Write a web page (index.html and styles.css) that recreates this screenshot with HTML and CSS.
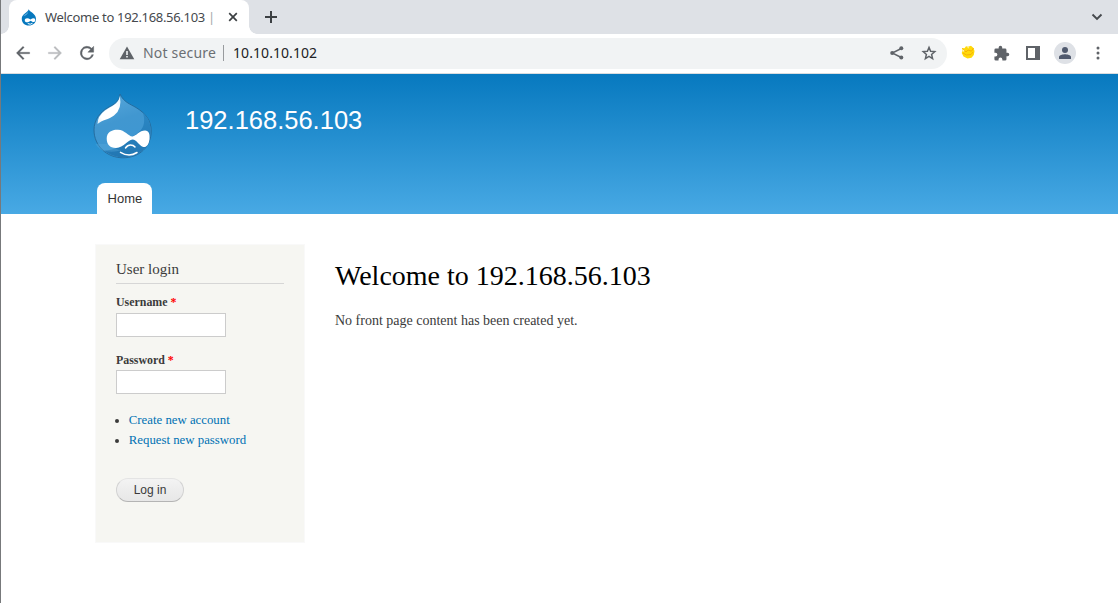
FILE: index.html
```
<!DOCTYPE html>
<html lang="en">
<head>
<meta charset="utf-8">
<title>Welcome to 192.168.56.103</title>
<link rel="stylesheet" href="styles.css">
</head>
<body>
<div class="window">
  <div class="tabstrip">
    <div class="tab">
      <svg class="favicon" width="16" height="17" viewBox="0 0 64 68"><path fill="#0678be" d="M31 1C34 12 60 18 60 40C60 57 47 66 31 66S3 56 3 39C3 20 27 14 31 1Z"/><path fill="#fff" d="M15 45C15 36 27 34 38 42C48 34 58 35 57 45C56 55 47 53 39 47C31 54 15 57 15 45Z"/><path stroke="#fff" stroke-width="4" fill="none" d="M27 58Q37 64 46 57"/><path fill="#65afe0" d="M29 9C26 19 16 20 9 29C15 27 28 24 29 9Z"/></svg>
      <span class="tab-title">Welcome to 192.168.56.103 <i class="tab-pipe">|</i></span>
      <svg class="tab-close" width="10" height="10" viewBox="0 0 10 10"><path d="M1.2 1.2 8.8 8.8M8.8 1.2 1.2 8.8" stroke="#3c4043" stroke-width="1.7"/></svg>
    </div>
    <svg class="new-tab" width="14" height="14" viewBox="0 0 14 14"><path d="M7 1V13M1 7H13" stroke="#3c4043" stroke-width="2"/></svg>
    <svg class="tab-search" width="12" height="8" viewBox="0 0 12 8"><path d="M1.5 1.5 6 6 10.500 1.5" fill="none" stroke="#45494d" stroke-width="1.9"/></svg>
  </div>
  <div class="toolbar">
    <svg class="nav-icon" width="20" height="20" viewBox="0 0 24 24"><path fill="#5f6368" d="M20 11H7.800l5.600-5.600L12 4l-8 8 8 8 1.400-1.400L7.800 13H20z" stroke="#5f6368" stroke-width=".3"/></svg>
    <svg class="nav-icon" width="20" height="20" viewBox="0 0 24 24"><path fill="#babcbe" d="M4 11h12.200l-5.600-5.600L12 4l8 8-8 8-1.400-1.400 5.600-5.600H4z" stroke="#babcbe" stroke-width=".3"/></svg>
    <svg class="nav-icon" width="20" height="20" viewBox="0 0 24 24"><path fill="#5f6368" stroke="#5f6368" stroke-width=".5" d="M17.650 6.350A8 8 0 1 0 19.730 14h-2.080A6 6 0 1 1 12 6c1.660 0 3.140.69 4.220 1.780L13 11h7V4z"/></svg>
    <div class="omnibox">
      <svg width="16" height="14" viewBox="0 0 16 14"><path fill="#5f6368" d="M8 .5 15.300 13.200H.7Z"/><path fill="#f1f3f4" d="M7.200 5h1.600v4H7.200zM7.200 10h1.600v1.600H7.200z"/></svg>
      <span class="security">Not secure</span>
      <span class="divider"></span>
      <span class="address">10.10.10.102</span>
      <svg class="share" width="16" height="16" viewBox="0 0 16 16"><path d="M12.300 3.500 3.200 8l9.100 4.500" fill="none" stroke="#5f6368" stroke-width="1.400"/><g fill="#5f6368"><circle cx="12.300" cy="3.300" r="2"/><circle cx="3.200" cy="8" r="2"/><circle cx="12.300" cy="12.600" r="2"/></g></svg>
      <svg class="star" width="16" height="16" viewBox="0 0 16 16"><path d="M8 2.400 9.600 6.200l4.200.4-3.200 2.800 1 4.200L8 11.400l-3.600 2.200 1-4.200L2.200 6.600 6.400 6.200Z" fill="none" stroke="#5f6368" stroke-width="1.500"/></svg>
    </div>
    <svg class="ext" width="14" height="14" viewBox="0 0 14 14"><path fill="#ffd90a" d="M1 3 3.500 3.200 5 1.300 7 1.800 10 .8 12.500 3 13.500 6 12.800 10 10.500 12.800 6.500 13.500 2.500 11.500.7 8 1.500 6Z"/><path d="M1.500 3.500 5 7 7 5 10.500 6.200 12.500 3M2 8 5.500 10 10 9.500 12 7" fill="none" stroke="#f7b008" stroke-width="1"/><path fill="#fff6b0" d="M1 4.500 3.500 5 2.500 7ZM6 2.500 8 2 7.500 3.500Z"/></svg>
    <svg class="puzzle" width="17" height="17" viewBox="0 0 24 24"><path fill="#5f6368" d="M20.500 11H19V7a2 2 0 0 0-2-2h-4V3.500a2.500 2.500 0 0 0-5 0V5H4a2 2 0 0 0-2 2v3.800h1.500a2.700 2.700 0 0 1 0 5.400H2V20a2 2 0 0 0 2 2h3.800v-1.500a2.700 2.700 0 0 1 5.400 0V22H17a2 2 0 0 0 2-2v-4h1.500a2.500 2.500 0 0 0 0-5z"/></svg>
    <svg class="panel" width="14" height="14" viewBox="0 0 14 14"><path fill="#5f6368" fill-rule="evenodd" d="M0 0H14V14H0ZM2 2V12H9V2Z"/></svg>
    <span class="avatar"><svg width="12" height="12" viewBox="0 0 12 12"><g fill="#505a6e"><circle cx="6" cy="3" r="3"/><path d="M0 12V10C0 8 4 7.200 6 7.200S12 8 12 10V12Z"/></g></svg></span>
    <svg class="menu" width="4" height="14" viewBox="0 0 4 14"><g fill="#5f6368"><circle cx="2" cy="2" r="1.500"/><circle cx="2" cy="7" r="1.500"/><circle cx="2" cy="12" r="1.500"/></g></svg>
  </div>
  <header class="site-header">
    <div class="branding">
      <svg class="logo" width="60" height="66" viewBox="0 0 60 66">
        <defs>
          <linearGradient id="drop" x1="0" y1="0" x2=".3" y2="1"><stop offset="0" stop-color="#5aa9dc"/><stop offset=".5" stop-color="#4197d0"/><stop offset="1" stop-color="#3e97d2"/></linearGradient>
          <linearGradient id="shade" x1="0" y1="0" x2="0" y2="1"><stop offset="0" stop-color="#2b87c4"/><stop offset="1" stop-color="#2277b3"/></linearGradient>
          <linearGradient id="shine" x1="1" y1="0" x2="0" y2="1"><stop offset="0" stop-color="#e4f2fb"/><stop offset=".3" stop-color="#fff"/><stop offset=".8" stop-color="#fff"/><stop offset="1" stop-color="#d9edf9"/></linearGradient>
        </defs>
        <path fill="url(#drop)" stroke="#24699a" stroke-width=".9" d="M27 1C30.500 9 37 11 43 14.500C52 20 58.200 27 58.200 38C58.200 54 46 64.800 30 64.800S1 53 1 37C1 27 7 19 15 14.500C22 11 26.500 8 27 1Z"/>
        <path fill="url(#shade)" d="M50 20C56 25 57.700 31 57.700 38C57.700 54 46 64.300 30 64.300C23 64.300 15 61 11 57.500C22 57 31 53 39 44C47 39 54 34 50 20Z"/>
        <path fill="#5dabdd" opacity=".35" d="M2.500 51H16Q22 57 29 57Q20 60 12 58Q6 57 2.500 51Z"/>
        <path fill="url(#shine)" d="M26.800 3C25.500 11.500 18 13 12 17.500Q4.500 23 4.500 31C9 27 16 26.500 21 22.500Q29.500 16 26.800 3Z"/>
        <path fill="#fff" d="M13.700 45.500C13.700 39 19 36.500 25 36.700C32 37 35 43 39.500 43.500C43 43 46.500 37.500 52 37.500C56 38 57 41 56.500 46C56 51.500 53.500 54.500 50.500 54C46.500 53 43.500 46.500 39.500 46.500C34.500 47 31 54.500 23 55C16.500 55 13.700 51 13.700 45.500Z"/>
        <path fill="none" stroke="#fff" stroke-width="1.500" stroke-linecap="round" d="M32.500 55Q34.500 52 37.500 52Q40.500 52 42 54M27.500 59.300Q36 64.500 44 59.500"/>
      </svg>
      <div class="site-name">192.168.56.103</div>
    </div>
    <nav class="main-nav"><a class="nav-tab">Home</a></nav>
  </header>
  <main class="page">
    <aside class="sidebar">
      <h2 class="block-title">User login</h2>
      <form>
        <label class="label">Username <span class="required">*</span></label>
        <input class="field" type="text">
        <label class="label label-password">Password <span class="required">*</span></label>
        <input class="field field-password" type="password">
        <ul class="links"><li><a>Create new account</a></li><li><a>Request new password</a></li></ul>
        <button class="submit" type="button">Log in</button>
      </form>
    </aside>
    <section class="content">
      <h1 class="title">Welcome to 192.168.56.103</h1>
      <p class="empty">No front page content has been created yet.</p>
    </section>
  </main>
</div>
</body>
</html>
```
FILE: styles.css
```
* { box-sizing: border-box; }
body { margin: 0; background: #fff; }
svg { display: block; flex: none; }
.window { height: 603px; border-left: 1px solid #77797b; overflow: hidden; }
.tabstrip { height: 34px; background: #dee1e6; display: flex; align-items: center; padding-left: 8px; font: 13px "Noto Sans", sans-serif; }
.tab { position: relative; width: 240px; height: 34px; background: #fff; border-radius: 8px 8px 0 0; display: flex; align-items: center; padding: 0 11px 0 12px; color: #45494d; }
.tab::before, .tab::after { content: ""; position: absolute; bottom: 0; width: 8px; height: 8px; }
.tab::before { left: -8px; background: radial-gradient(circle at 0 0, transparent 7.5px, #fff 8px); }
.tab::after { right: -8px; background: radial-gradient(circle at 100% 0, transparent 7.5px, #fff 8px); }
.tab-title { margin-left: 8px; width: 175px; white-space: nowrap; letter-spacing: -.31px; }
.tab-pipe { font-style: normal; color: #a5a7a9; }
.tab-close { margin-left: 8px; }
.new-tab { margin-left: 15px; }
.tab-search { margin: 0 15px 0 auto; }
.toolbar { height: 40px; border-bottom: 1px solid #d9dcdf; display: flex; align-items: center; padding: 0 0 1px 12px; font: 14px "Noto Sans", sans-serif; }
.nav-icon { margin-right: 12px; }
.omnibox { width: 838px; height: 31px; border-radius: 16px; background: #f1f3f4; display: flex; align-items: center; padding: 0 10px; }
.security { color: #6b6f73; margin-left: 8px; width: 74px; white-space: nowrap; letter-spacing: .18px; padding-bottom: 2px; }
.divider { width: 1px; height: 16px; background: #989b9e; margin: 0 9px 0 6px; }
.address { color: #202124; letter-spacing: .07px; padding-bottom: 2px; }
.share { margin-left: auto; }
.star { margin: 0 0 0 16px; }
.ext { margin: 0 0 2px 14px; }
.puzzle { margin-left: 17.5px; }
.panel { margin-left: 16.5px; }
.avatar { width: 22px; height: 22px; border-radius: 50%; background: #dee1e6; display: flex; align-items: center; justify-content: center; margin-left: 14px; }
.menu { margin-left: 19.5px; }
.site-header { height: 140px; background: linear-gradient(#0779bf, #48a9e4); display: flex; flex-direction: column; padding: 19px 0 0 92px; }
.branding { display: flex; height: 90px; }
.site-name { margin: 13px 0 0 32px; color: #fffeff; font: 25.5px/29px "Liberation Sans", sans-serif; }
.main-nav { padding-left: 4px; }
.nav-tab { display: block; width: 55px; height: 31px; background: #fff; border-radius: 8px 8px 0 0; padding-left: 10.6px; font: 13px/31px "Liberation Sans", sans-serif; color: #333; }
.page { display: flex; align-items: flex-start; padding: 30px 0 0 94px; font-family: "Liberation Serif", serif; color: #3b3b3b; }
.sidebar { width: 210px; height: 299px; background: #f6f6f2; border: 1px solid #f9f9f9; padding: 15px 20px; }
.block-title { font-size: 15px; line-height: 19px; font-weight: 400; margin: 0 0 10px; height: 24px; border-bottom: 1px solid #d6d6d6; }
.label { display: block; font-size: 11.9px; line-height: 17px; font-weight: 700; }
.label-password { margin-top: 15px; }
.required { color: #f00; }
.field { display: block; width: 110px; height: 24px; border: 1px solid #ccc; background: #fff; padding: 2px; margin: 2px 0 0; }
.field-password { margin-top: 1px; }
.links { margin: 16px 0 28px; padding: 0 0 0 12.8px; font-size: 12.8px; line-height: 20px; }
.links a { color: #0071b3; }
.submit { display: block; width: 68px; height: 24px; border: 1px solid #e4e4e4; border-bottom-color: #b4b4b4; border-left-color: #d2d2d2; border-right-color: #d2d2d2; border-radius: 12px; padding: 0; background: linear-gradient(#f3f3f3, #e7e7e7); font: 12px/22px "Liberation Sans", sans-serif; color: #3a3a3a; }
.content { padding: 15px 0 0 30px; }
.title { margin: 0; color: #000; font-size: 28px; line-height: 34px; font-weight: 400; }
.empty { margin: 18px 0 0; font-size: 14px; line-height: 20px; }
```
